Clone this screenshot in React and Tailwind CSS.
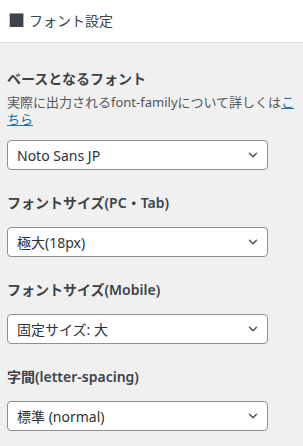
import { ChevronDown } from "lucide-react";

const font = { fontFamily: '"Noto Sans", "Noto Sans CJK JP", sans-serif' };

const controls = [
  { label: "フォントサイズ(PC・Tab)", value: "極大(18px)" },
  { label: "フォントサイズ(Mobile)", value: "固定サイズ: 大" },
  { label: "字間(letter-spacing)", value: "標準 (normal)" },
];

function SelectBox({ value }) {
  return (
    <div className="relative mt-3 w-[261px]">
      <select
        defaultValue={value}
        className="block h-[30px] w-full appearance-none rounded-[4px] border border-[#8c8f94] bg-white pl-[9px] pr-6 text-[14px] text-[#2c3338] outline-none"
      >
        <option>{value}</option>
      </select>
      <ChevronDown
        className="pointer-events-none absolute right-[8px] top-[8px] h-[14px] w-[14px] text-[#50575e]"
        strokeWidth={2.6}
      />
    </div>
  );
}

function Label({ children }) {
  return (
    <div className="text-[14px] font-semibold leading-[24px] text-[#3c434a]">
      {children}
    </div>
  );
}

export default function App() {
  return (
    <div className="min-h-screen bg-[#f0f0f1]" style={font}>
      {/* Section header */}
      <div className="flex h-[43px] items-center border-b border-[#dcdcde] bg-white px-2 pb-[2px] text-[14px] text-[#3c434a]">
        <span className="mr-[4px] text-[17px] leading-none">■</span>
        フォント設定
      </div>

      <div className="pl-[7px] pt-[24px]">
        {/* Base font */}
        <Label>ベースとなるフォント</Label>
        <p className="mt-[3px] text-[13px] leading-[17px] text-[#50575e]">
          <span className="whitespace-nowrap">
            実際に出力されるfont-familyについて詳しくは
            <a href="#" className="text-[#2271b1] underline">
              こ
            </a>
          </span>
          <br />
          <a href="#" className="text-[#2271b1] underline">
            ちら
          </a>
        </p>
        <SelectBox value="Noto Sans JP" />

        {controls.map((c) => (
          <div key={c.label} className="mt-[21px]">
            <Label>{c.label}</Label>
            <SelectBox value={c.value} />
          </div>
        ))}
      </div>
    </div>
  );
}
